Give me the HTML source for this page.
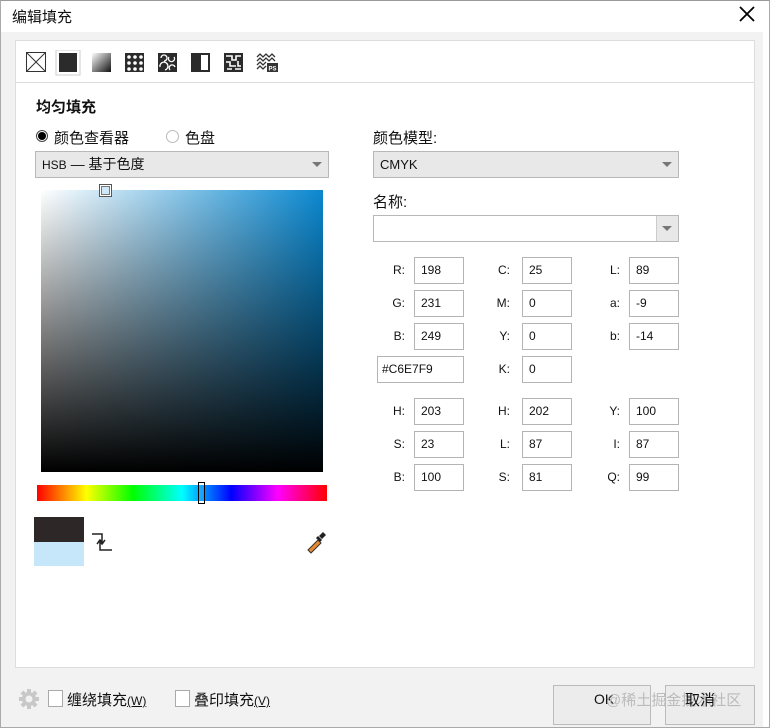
<!DOCTYPE html><html><head><meta charset="utf-8"><style>
*{margin:0;padding:0;box-sizing:border-box}
body{width:770px;height:728px;background:#fff;font-family:"Liberation Sans","Noto Sans CJK SC",sans-serif;font-size:13px;color:#111;position:relative;overflow:hidden}
.a{position:absolute}
.in{position:absolute;height:27px;width:50px;border:1px solid #b4b4b4;background:#fff;font-size:12px;line-height:25px;padding-left:6px}
.lb{position:absolute;font-size:12px;line-height:27px;text-align:right;width:20px}
.dd{position:absolute;border:1px solid #b8b8b8;background:#e8e8e8;height:27px;line-height:25px;padding-left:6px}
.tri{position:absolute;right:6px;top:10px;width:0;height:0;border-left:5px solid transparent;border-right:5px solid transparent;border-top:5px solid #777}
</style></head><body>
<div class="a" style="left:0;top:0;width:770px;height:728px;border:1px solid #aaa;border-top-color:#999"></div>
<div class="a" style="left:12px;top:6px;font-size:15px">编辑填充</div>
<svg class="a" style="left:738px;top:5px" width="18" height="18"><path d="M2 2L16 16M16 2L2 16" stroke="#000" stroke-width="1.8"/></svg>
<div class="a" style="left:1px;top:32px;width:762px;height:695px;background:#f2f2f2"></div>
<div class="a" style="left:15px;top:40px;width:740px;height:628px;background:#fff;border:1px solid #ddd"></div>
<div class="a" style="left:16px;top:82px;width:738px;height:1px;background:#ddd"></div>
<!-- toolbar -->
<svg class="a" style="left:25px;top:50px" width="260" height="26">
<rect x="1.5" y="2.5" width="19" height="19" fill="#fff" stroke="#333"/><path d="M2 3L20 21M20 3L2 21" stroke="#333"/>
<rect x="31" y="0" width="24" height="25" fill="#fff" stroke="#ccc"/>
<rect x="34" y="3" width="18" height="19" fill="#2b2b2b"/>
<defs><linearGradient id="g" x1="0" y1="0" x2="1" y2="1"><stop offset="0" stop-color="#fff"/><stop offset="1" stop-color="#111"/></linearGradient></defs>
<rect x="67" y="3" width="19" height="19" fill="url(#g)"/>
<rect x="100" y="3" width="19" height="19" fill="#2b2b2b"/>
<g fill="#fff"><circle cx="104" cy="7" r="1.8"/><circle cx="110" cy="7" r="1.8"/><circle cx="116" cy="7" r="1.8"/><circle cx="104" cy="13" r="1.8"/><circle cx="110" cy="13" r="1.8"/><circle cx="116" cy="13" r="1.8"/><circle cx="104" cy="19" r="1.8"/><circle cx="110" cy="19" r="1.8"/><circle cx="116" cy="19" r="1.8"/></g>
<rect x="133" y="3" width="19" height="19" fill="#2b2b2b"/><path d="M136 8a3 3 0 1 1 3 3M144 7a3 3 0 1 0 5 0M135 17a4 4 0 1 1 5 3M145 20a3 3 0 1 1 5-3" stroke="#fff" fill="none" stroke-width="1.3"/>
<rect x="166" y="3" width="19" height="19" fill="#2b2b2b"/><rect x="176" y="5" width="7" height="15" fill="#fff"/>
<rect x="199" y="3" width="19" height="19" fill="#2b2b2b"/><path d="M201 6h6v4h4v-4h5M201 12h4v4h6M213 11v5h3M202 19h5M210 19h6" stroke="#fff" stroke-width="1.6" fill="none"/>
<path d="M232 7l3-3 3 3 3-3 3 3 3-3 3 3M232 11l3-3 3 3 3-3 3 3 3-3 3 3M232 15l3-3 3 3 3-3M232 19l3-3 3 3 3-3" stroke="#333" fill="none" stroke-width="1.3"/>
<rect x="242" y="13" width="11" height="9" fill="#333"/><text x="243.5" y="20.5" font-size="6" fill="#fff" font-family="Liberation Sans" font-weight="bold">PS</text>
</svg>
<div class="a" style="left:36px;top:96px;font-size:15px;font-weight:bold">均匀填充</div>
<div class="a" style="left:36px;top:130px;width:12px;height:12px;border-radius:50%;border:1px solid #444;background:#fff"><div style="margin:1px;width:8px;height:8px;border-radius:50%;background:#000"></div></div>
<div class="a" style="left:54px;top:127px;font-size:15px">颜色查看器</div>
<div class="a" style="left:166px;top:130px;width:13px;height:13px;border-radius:50%;border:1px solid #bbb;background:#fff"></div>
<div class="a" style="left:185px;top:127px;font-size:15px">色盘</div>
<div class="dd" style="left:35px;top:151px;width:294px;font-size:14px"><span style="font-size:12px">HSB</span> — 基于色度<div class="tri"></div></div>
<!-- color square -->
<div class="a" style="left:41px;top:190px;width:282px;height:282px;background:linear-gradient(to right,#fff,#0a88d0)"></div>
<div class="a" style="left:41px;top:190px;width:282px;height:282px;background:linear-gradient(to bottom,rgba(0,0,0,0),#000)"></div>
<div class="a" style="left:99px;top:184px;width:13px;height:13px;border:1px solid #555;background:#fff"><div style="margin:1px;width:9px;height:9px;border:1px solid #777;background:#cfe9f8"></div></div>
<div class="a" style="left:37px;top:485px;width:290px;height:16px;background:linear-gradient(to right,#f00,#ff0 17%,#0f0 33%,#0ff 50%,#00f 67%,#f0f 83%,#f00)"></div>
<div class="a" style="left:198px;top:482px;width:7px;height:22px;border:1px solid #000;background:rgba(255,255,255,.1)"></div>
<div class="a" style="left:34px;top:517px;width:50px;height:25px;background:#2d2728"></div>
<div class="a" style="left:34px;top:542px;width:50px;height:24px;background:#c6e7f9"></div>
<svg class="a" style="left:90px;top:528px" width="24" height="26"><path d="M2 6h10v9M9 12l3 4 3-4M22 22h-12v-9M7 16l3-4 3 4" stroke="#222" stroke-width="1.5" fill="none"/></svg>
<svg class="a" style="left:304px;top:530px" width="24" height="24"><path d="M4 20l10-10 3 3-10 10z" fill="#e58a2e" stroke="#333"/><path d="M15 6l4-4 3 3-4 4z" fill="#222"/><path d="M13 7l4 4" stroke="#222" stroke-width="3"/></svg>
<!-- right -->
<div class="a" style="left:373px;top:127px;font-size:15px">颜色模型:</div>
<div class="dd" style="left:373px;top:151px;width:306px;font-size:13px">CMYK<div class="tri"></div></div>
<div class="a" style="left:373px;top:191px;font-size:15px">名称:</div>
<div class="a" style="left:373px;top:215px;width:306px;height:27px;border:1px solid #b8b8b8;background:#fff"><div style="position:absolute;right:0;top:0;width:22px;height:25px;background:#e8e8e8;border-left:1px solid #ccc"><div class="tri" style="right:6px"></div></div></div>
<div class="lb" style="left:385px;top:257px">R:</div><div class="in" style="left:414px;top:257px">198</div>
<div class="lb" style="left:490px;top:257px">C:</div><div class="in" style="left:522px;top:257px">25</div>
<div class="lb" style="left:600px;top:257px">L:</div><div class="in" style="left:629px;top:257px">89</div>
<div class="lb" style="left:385px;top:290px">G:</div><div class="in" style="left:414px;top:290px">231</div>
<div class="lb" style="left:490px;top:290px">M:</div><div class="in" style="left:522px;top:290px">0</div>
<div class="lb" style="left:600px;top:290px">a:</div><div class="in" style="left:629px;top:290px">-9</div>
<div class="lb" style="left:385px;top:323px">B:</div><div class="in" style="left:414px;top:323px">249</div>
<div class="lb" style="left:490px;top:323px">Y:</div><div class="in" style="left:522px;top:323px">0</div>
<div class="lb" style="left:600px;top:323px">b:</div><div class="in" style="left:629px;top:323px">-14</div>
<div class="in" style="left:377px;top:356px;width:87px;padding-left:4px">#C6E7F9</div>
<div class="lb" style="left:490px;top:356px">K:</div><div class="in" style="left:522px;top:356px">0</div>
<div class="lb" style="left:385px;top:398px">H:</div><div class="in" style="left:414px;top:398px">203</div>
<div class="lb" style="left:490px;top:398px">H:</div><div class="in" style="left:522px;top:398px">202</div>
<div class="lb" style="left:600px;top:398px">Y:</div><div class="in" style="left:629px;top:398px">100</div>
<div class="lb" style="left:385px;top:431px">S:</div><div class="in" style="left:414px;top:431px">23</div>
<div class="lb" style="left:490px;top:431px">L:</div><div class="in" style="left:522px;top:431px">87</div>
<div class="lb" style="left:600px;top:431px">I:</div><div class="in" style="left:629px;top:431px">87</div>
<div class="lb" style="left:385px;top:464px">B:</div><div class="in" style="left:414px;top:464px">100</div>
<div class="lb" style="left:490px;top:464px">S:</div><div class="in" style="left:522px;top:464px">81</div>
<div class="lb" style="left:600px;top:464px">Q:</div><div class="in" style="left:629px;top:464px">99</div>
<!-- footer -->
<svg class="a" style="left:18px;top:688px" width="22" height="22"><g fill="#c8c8c8"><circle cx="11" cy="11" r="7"/><rect x="9" y="1" width="4" height="20"/><rect x="1" y="9" width="20" height="4"/><rect x="9" y="1" width="4" height="20" transform="rotate(45 11 11)"/><rect x="9" y="1" width="4" height="20" transform="rotate(-45 11 11)"/></g><circle cx="11" cy="11" r="3.5" fill="#f2f2f2"/></svg>
<div class="a" style="left:48px;top:690px;width:15px;height:17px;border:1px solid #aaa;background:#fff"></div>
<div class="a" style="left:67px;top:689px;font-size:15px">缠绕填充<span style="font-size:12px;text-decoration:underline">(W)</span></div>
<div class="a" style="left:175px;top:690px;width:15px;height:17px;border:1px solid #aaa;background:#fff"></div>
<div class="a" style="left:194px;top:689px;font-size:15px">叠印填充<span style="font-size:12px;text-decoration:underline">(V)</span></div>
<div class="a" style="left:553px;top:685px;width:98px;height:40px;border:1px solid #bbb;background:#ececec"></div>
<div class="a" style="left:665px;top:685px;width:90px;height:40px;border:1px solid #bbb;background:#ececec"></div>
<div class="a" style="left:594px;top:691px;font-size:14px">OK</div>
<div class="a" style="left:606px;top:689px;font-size:15px;color:#bbb">@稀土掘金技术社区</div>
<div class="a" style="left:685px;top:689px;font-size:15px">取消</div>
</body></html>
